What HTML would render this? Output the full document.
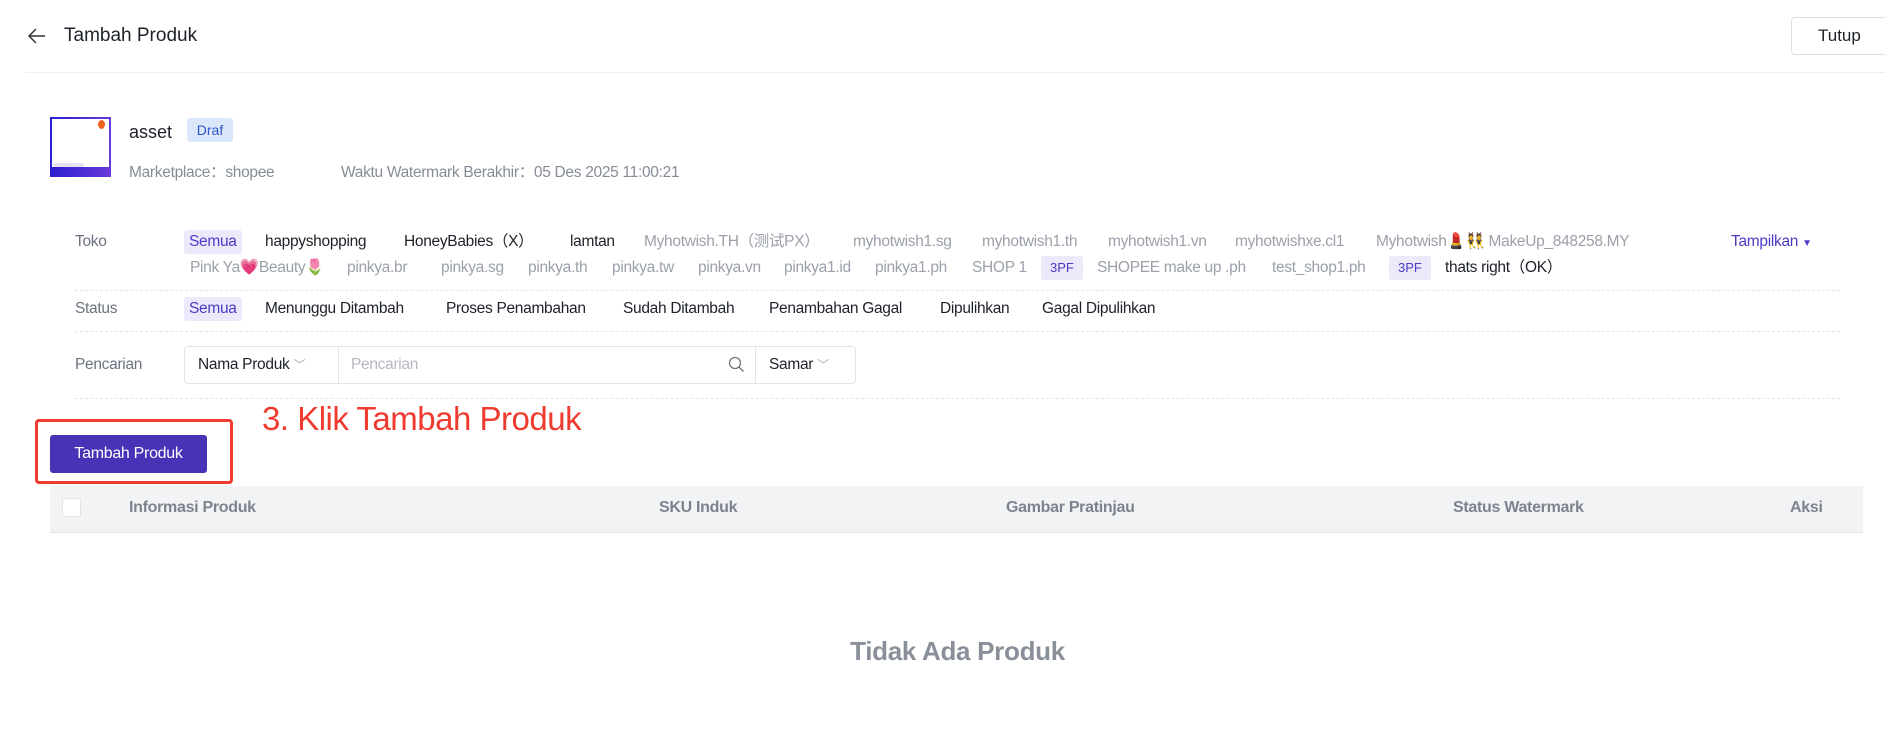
<!DOCTYPE html>
<html><head><meta charset="utf-8"><style>
*{margin:0;padding:0;box-sizing:border-box}
body{width:1885px;height:740px;background:#fff;font-family:"Liberation Sans","Noto Sans CJK SC",sans-serif;position:relative;overflow:hidden;color:#1d2129}
.a{position:absolute;white-space:nowrap}
.t{font-size:15.5px;line-height:20px;letter-spacing:-0.3px}
.g{color:#9ba0aa}
.l{color:#6b7280}
.chip{background:#ece9fb;color:#4b3cc7;border-radius:3px;padding:2px 5px;line-height:20px;font-size:15.5px;letter-spacing:-0.3px}
.pf{background:#ece9fb;color:#4b3cc7;border-radius:3px;font-size:13px;line-height:24px;padding:0 9px}
.hr{position:absolute;height:0;border-top:1px dashed #e3e5e8;left:75px;width:1765px}
.th{font-size:16px;font-weight:bold;color:#7d838e;top:499px;letter-spacing:-0.3px}
</style></head><body>
<svg class="a" style="left:28px;top:28px" width="18" height="16" viewBox="0 0 18 16"><path d="M8 1L1 8L8 15M1 8H17" fill="none" stroke="#333" stroke-width="1.5"/></svg>
<div class="a" style="left:64px;top:24px;font-size:19px;line-height:24px">Tambah Produk</div>
<div class="a" style="left:1791px;top:17px;width:110px;height:38px;border:1px solid #dcdfe4;border-radius:4px;font-size:17px;line-height:36px;padding-left:26px">Tutup</div>
<div class="a" style="left:25px;top:72px;width:1860px;border-top:1px solid #eceef1"></div>

<div class="a" style="left:50px;top:117px;width:61px;height:60px;background:linear-gradient(90deg,#2a1fd0,#6a3ad8);"></div>
<div class="a" style="left:52px;top:119px;width:57px;height:48px;background:#fff"></div>
<div class="a" style="left:53px;top:163px;width:31px;height:4px;background:#e6e3f5;border-radius:2px"></div>
<div class="a" style="left:98px;top:120px;width:7px;height:9px;background:#f0641e;border-radius:50%"></div>
<div class="a" style="left:129px;top:120px;font-size:18px;line-height:24px">asset</div>
<div class="a" style="left:187px;top:118px;width:46px;height:24px;background:#dbe8fc;color:#2f55c9;border-radius:3px;font-size:14px;line-height:24px;text-align:center">Draf</div>
<div class="a t" style="left:129px;top:163px;color:#868c97">Marketplace：shopee</div>
<div class="a t" style="left:341px;top:163px;color:#868c97">Waktu Watermark Berakhir：05 Des 2025 11:00:21</div>

<div class="a t l" style="left:75px;top:232px">Toko</div>
<div class="a chip" style="left:184px;top:230px">Semua</div>
<div class="a t" style="left:265px;top:232px">happyshopping</div>
<div class="a t" style="left:404px;top:232px">HoneyBabies（X）</div>
<div class="a t" style="left:570px;top:232px">lamtan</div>
<div class="a t g" style="left:644px;top:232px">Myhotwish.TH（测试PX）</div>
<div class="a t g" style="left:853px;top:232px">myhotwish1.sg</div>
<div class="a t g" style="left:982px;top:232px">myhotwish1.th</div>
<div class="a t g" style="left:1108px;top:232px">myhotwish1.vn</div>
<div class="a t g" style="left:1235px;top:232px">myhotwishxe.cl1</div>
<div class="a t g" style="left:1376px;top:232px">Myhotwish💄👯 MakeUp_848258.MY</div>
<div class="a t" style="left:1731px;top:232px;color:#4b3cc7">Tampilkan <span style="font-size:10px">▼</span></div>

<div class="a t g" style="left:190px;top:258px">Pink Ya💗Beauty🌷</div>
<div class="a t g" style="left:347px;top:258px">pinkya.br</div>
<div class="a t g" style="left:441px;top:258px">pinkya.sg</div>
<div class="a t g" style="left:528px;top:258px">pinkya.th</div>
<div class="a t g" style="left:612px;top:258px">pinkya.tw</div>
<div class="a t g" style="left:698px;top:258px">pinkya.vn</div>
<div class="a t g" style="left:784px;top:258px">pinkya1.id</div>
<div class="a t g" style="left:875px;top:258px">pinkya1.ph</div>
<div class="a t g" style="left:972px;top:258px">SHOP 1</div>
<div class="a pf" style="left:1041px;top:256px">3PF</div>
<div class="a t g" style="left:1097px;top:258px">SHOPEE make up .ph</div>
<div class="a t g" style="left:1272px;top:258px">test_shop1.ph</div>
<div class="a pf" style="left:1389px;top:256px">3PF</div>
<div class="a t" style="left:1445px;top:258px">thats right（OK）</div>
<div class="hr" style="top:290px"></div>

<div class="a t l" style="left:75px;top:299px">Status</div>
<div class="a chip" style="left:184px;top:297px">Semua</div>
<div class="a t" style="left:265px;top:299px">Menunggu Ditambah</div>
<div class="a t" style="left:446px;top:299px">Proses Penambahan</div>
<div class="a t" style="left:623px;top:299px">Sudah Ditambah</div>
<div class="a t" style="left:769px;top:299px">Penambahan Gagal</div>
<div class="a t" style="left:940px;top:299px">Dipulihkan</div>
<div class="a t" style="left:1042px;top:299px">Gagal Dipulihkan</div>
<div class="hr" style="top:331px"></div>

<div class="a t l" style="left:75px;top:355px">Pencarian</div>
<div class="a" style="left:184px;top:346px;width:672px;height:38px;border:1px solid #e1e3e7;border-radius:4px"></div>
<div class="a" style="left:338px;top:347px;height:36px;border-left:1px solid #e1e3e7"></div>
<div class="a" style="left:755px;top:347px;height:36px;border-left:1px solid #e1e3e7"></div>
<div class="a t" style="left:198px;top:355px">Nama Produk <span style="color:#aaa;font-size:12px">﹀</span></div>
<div class="a t" style="left:351px;top:355px;color:#b4b8c0">Pencarian</div>
<svg class="a" style="left:728px;top:356px" width="17" height="17" viewBox="0 0 17 17"><circle cx="7" cy="7" r="5.5" fill="none" stroke="#777" stroke-width="1.3"/><path d="M11 11L15.5 15.5" stroke="#777" stroke-width="1.3"/></svg>
<div class="a t" style="left:769px;top:355px">Samar <span style="color:#aaa;font-size:12px">﹀</span></div>
<div class="hr" style="top:398px"></div>

<div class="a" style="left:262px;top:399px;font-size:33px;line-height:40px;color:#ef3b2f;letter-spacing:-0.5px">3. Klik Tambah Produk</div>
<div class="a" style="left:35px;top:419px;width:198px;height:65px;border:3px solid #ef3b2f;border-radius:4px"></div>
<div class="a" style="left:50px;top:435px;width:157px;height:38px;background:#4633b5;border-radius:3px;color:#fff;font-size:16px;line-height:38px;text-align:center;letter-spacing:-0.3px">Tambah Produk</div>

<div class="a" style="left:50px;top:486px;width:1813px;height:47px;background:#f2f3f5;border-bottom:1px solid #e3e5e8"></div>
<div class="a" style="left:62px;top:498px;width:19px;height:19px;background:#fff;border:1px solid #e1e3e7;border-radius:2px"></div>
<div class="a th" style="left:129px">Informasi Produk</div>
<div class="a th" style="left:659px">SKU Induk</div>
<div class="a th" style="left:1006px">Gambar Pratinjau</div>
<div class="a th" style="left:1453px">Status Watermark</div>
<div class="a th" style="left:1790px">Aksi</div>

<div class="a" style="left:0;width:1915px;top:636px;text-align:center;font-size:26px;font-weight:bold;color:#8a909a;letter-spacing:-0.3px">Tidak Ada Produk</div>
</body></html>
